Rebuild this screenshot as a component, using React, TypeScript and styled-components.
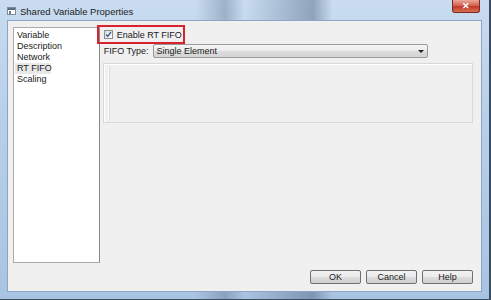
import React, { FC, useState } from 'react'
import styled, { createGlobalStyle } from 'styled-components'

const GlobalStyle = createGlobalStyle`
  html, body {
    margin: 0;
    padding: 0;
    background: #2c3a48;
  }
  body {
    font-family: "Liberation Sans", Arial, sans-serif;
    font-size: 9px;
    color: #1a1a1a;
  }
`

const Window = styled.div`
  width: 491px;
  height: 300px;
  box-sizing: border-box;
  display: flex;
  flex-direction: column;
  padding: 0 7px 7px 7px;
  background:
    linear-gradient(90deg, rgba(255,255,255,0) 0%, rgba(255,255,255,0) 40%, rgba(60,80,110,0.3) 46%, rgba(255,255,255,0) 50%, rgba(60,80,110,0.4) 64%, rgba(255,255,255,0) 68%, rgba(255,255,255,0) 100%),
    linear-gradient(180deg, #c9dcf0 0%, #b7cfe9 40%, #a9c4e2 100%);
  border-right: 2px solid #3b4c60;
  border-bottom: 1px solid #3b4c60;
  position: relative;
`

const TitleBar = styled.div`
  height: 20px;
  display: flex;
  align-items: center;
  gap: 4px;
`

const TitleIcon = styled.div`
  width: 9px;
  height: 8px;
  margin-top: 2px;
  border: 1px solid #7d8a99;
  background: linear-gradient(180deg, #5d6c7e 0 2px, #ffffff 2px);
  box-sizing: border-box;
  position: relative;
  &::after {
    content: '';
    position: absolute;
    left: 1px;
    top: 3px;
    width: 2px;
    height: 3px;
    background: #6a7a8c;
  }
`

const Title = styled.span`
  font-family: "Liberation Sans", Arial, sans-serif;
  font-size: 9.5px;
  color: #1c1c1c;
  margin-top: 2px;
`

const CloseButton = styled.div`
  position: absolute;
  top: 0;
  right: 9px;
  width: 28px;
  height: 13px;
  border: 1px solid #7a2a22;
  border-top: none;
  border-radius: 0 0 3px 3px;
  background: linear-gradient(180deg, #e9a79a 0%, #d46552 45%, #c0392b 55%, #d9704f 100%);
  display: flex;
  align-items: center;
  justify-content: center;
  color: #fff;
  font-weight: bold;
  font-size: 9px;
  box-sizing: border-box;
`

const Client = styled.div`
  flex: 1;
  background: #f0f0f0;
  border: 1px solid #8da5c2;
  box-sizing: border-box;
  display: flex;
  flex-direction: column;
  padding: 6px 8px 0 5px;
`

const Main = styled.div`
  display: flex;
  height: 236px;
`

const ListBox = styled.ul`
  list-style: none;
  margin: 0;
  padding: 2px 1px;
  width: 87px;
  box-sizing: border-box;
  background: #ffffff;
  border: 1px solid #a9a9a9;
  border-right-color: #8a8a8a;
`

const ListItem = styled.li<{ $selected?: boolean }>`
  height: 11px;
  line-height: 11px;
  padding-left: 2px;
  white-space: nowrap;
  width: ${p => (p.$selected ? '34px' : 'auto')};
  background: ${p => (p.$selected ? '#e8e8e8' : 'transparent')};
`

const Pane = styled.div`
  margin-left: 3px;
  width: 372px;
  display: flex;
  flex-direction: column;
`

const CheckRow = styled.label`
  position: relative;
  height: 15px;
  display: flex;
  align-items: center;
  gap: 4px;
  padding-left: 1px;
`

const Highlight = styled.span`
  position: absolute;
  left: -6px;
  top: -2px;
  width: 88px;
  height: 19px;
  border: 2px solid #d8232f;
  box-sizing: border-box;
`

const CheckBox = styled.span`
  width: 9px;
  height: 9px;
  box-sizing: border-box;
  border: 1px solid #8e8f8f;
  background: linear-gradient(135deg, #dcdcdc, #ffffff);
  display: flex;
  align-items: center;
  justify-content: center;
`

const FieldRow = styled.div`
  margin-top: 2px;
  height: 14px;
  display: flex;
  align-items: center;
  gap: 4px;
  padding: 0 45px 0 1px;
`

const FieldLabel = styled.span`
  white-space: nowrap;
`

const Select = styled.div`
  flex: 1;
  height: 14px;
  box-sizing: border-box;
  border: 1px solid #9a9a9a;
  border-radius: 2px;
  background: linear-gradient(180deg, #f4f4f4 0%, #ebebeb 50%, #dcdcdc 51%, #d4d4d4 100%);
  display: flex;
  align-items: center;
  justify-content: space-between;
  padding: 0 3px;
`

const Arrow = styled.span`
  width: 0;
  height: 0;
  border-left: 3px solid transparent;
  border-right: 3px solid transparent;
  border-top: 3px solid #222;
  margin-top: 1px;
`

const GroupBox = styled.div`
  margin-top: 5px;
  height: 60px;
  box-sizing: border-box;
  border: 1px solid #d9d9d9;
  box-shadow: inset 1px 1px 0 #ffffff;
  padding: 2px 0 2px 5px;
  display: flex;
`

const GroupInner = styled.div`
  flex: 1;
  border-left: 1px solid #dedede;
  box-shadow: -1px 0 0 #fafafa;
`

const Footer = styled.div`
  display: flex;
  justify-content: flex-end;
  gap: 5px;
  margin-top: 7px;
`

const Button = styled.button`
  width: 51px;
  height: 14px;
  padding: 0;
  box-sizing: border-box;
  border: 1px solid #707070;
  border-radius: 2px;
  background: linear-gradient(180deg, #f2f2f2 0%, #ebebeb 50%, #dddddd 51%, #cfcfcf 100%);
  font-family: "Liberation Sans", Arial, sans-serif;
  font-size: 9px;
  color: #1a1a1a;
`

const items = ['Variable', 'Description', 'Network', 'RT FIFO', 'Scaling']

const App: FC = () => {
  const [selected] = useState<string>('RT FIFO')

  return (
    <>
      <GlobalStyle />
      <Window>
        <TitleBar>
          <TitleIcon />
          <Title>Shared Variable Properties</Title>
        </TitleBar>
        <CloseButton>✕</CloseButton>
        <Client>
          <Main>
            <ListBox>
              {items.map(item => (
                <ListItem key={item} $selected={item === selected}>{item}</ListItem>
              ))}
            </ListBox>
            <Pane>
              <CheckRow>
                <Highlight />
                <CheckBox>
                  <svg width="7" height="7" viewBox="0 0 7 7">
                    <path d="M1 3.5 L2.8 5.5 L6 1" stroke="#3a5b9c" strokeWidth="1.3" fill="none" />
                  </svg>
                </CheckBox>
                Enable RT FIFO
              </CheckRow>
              <FieldRow>
                <FieldLabel>FIFO Type:</FieldLabel>
                <Select>
                  <span>Single Element</span>
                  <Arrow />
                </Select>
              </FieldRow>
              <GroupBox>
                <GroupInner />
              </GroupBox>
            </Pane>
          </Main>
          <Footer>
            <Button type='button'>OK</Button>
            <Button type='button'>Cancel</Button>
            <Button type='button'>Help</Button>
          </Footer>
        </Client>
      </Window>
    </>
  )
}

export default App
